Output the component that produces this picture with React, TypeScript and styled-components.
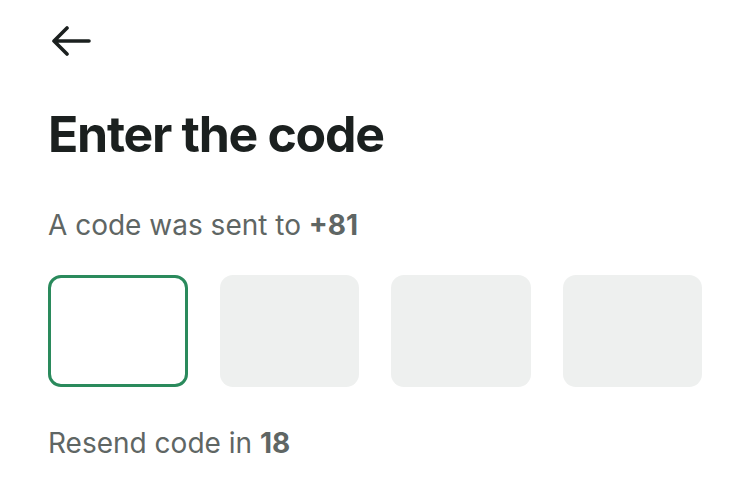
import React from "react";
import styled, { createGlobalStyle } from "styled-components";

const GlobalStyle = createGlobalStyle`
  html, body {
    margin: 0;
    padding: 0;
    background: #ffffff;
  }
  body {
    font-family: Inter, "Noto Sans", "Liberation Sans", sans-serif;
    -webkit-font-smoothing: antialiased;
  }
`;

const Page = styled.div`
  width: 750px;
  height: 477px;
  box-sizing: border-box;
  padding: 24px 48px 0;
  display: flex;
  flex-direction: column;
`;

const BackButton = styled.button`
  width: 44px;
  height: 34px;
  padding: 0;
  margin-left: 3px;
  border: none;
  background: transparent;
  display: flex;
  align-items: center;
  justify-content: flex-start;
  cursor: pointer;
`;

const Title = styled.h1`
  margin: 46px 0 0;
  font-size: 50px;
  line-height: 60px;
  font-weight: 700;
  letter-spacing: -1.3px;
  color: #1b201f;
`;

const Subtitle = styled.p`
  margin: 43px 0 0;
  font-size: 28px;
  line-height: 36px;
  color: #5f6664;

  b {
    font-weight: 700;
  }
`;

const CodeRow = styled.div`
  margin-top: 32px;
  display: grid;
  grid-template-columns: repeat(4, 1fr);
  gap: 32px;
`;

const CodeBox = styled.div<{ $active?: boolean }>`
  height: 112px;
  box-sizing: border-box;
  border-radius: 13px;
  background: ${(p) => (p.$active ? "#ffffff" : "#eef0ef")};
  border: ${(p) => (p.$active ? "3px solid #2a8a5c" : "none")};
`;

const Resend = styled.p`
  margin: 38px 0 0;
  font-size: 28px;
  line-height: 36px;
  color: #5f6664;

  b {
    font-weight: 700;
  }
`;

const ArrowIcon = () => (
  <svg width="40" height="30" viewBox="0 0 40 30" fill="none">
    <path
      d="M38 15H4M16 2L3 15l13 13"
      stroke="#1b201f"
      strokeWidth="3.6"
      strokeLinecap="round"
      strokeLinejoin="round"
    />
  </svg>
);

export default function App() {
  return (
    <>
      <GlobalStyle />
      <Page>
        <BackButton aria-label="Back">
          <ArrowIcon />
        </BackButton>
        <Title>Enter the code</Title>
        <Subtitle>
          A code was sent to <b>+81</b>
        </Subtitle>
        <CodeRow>
          <CodeBox $active />
          <CodeBox />
          <CodeBox />
          <CodeBox />
        </CodeRow>
        <Resend>
          Resend code in <b>18</b>
        </Resend>
      </Page>
    </>
  );
}
